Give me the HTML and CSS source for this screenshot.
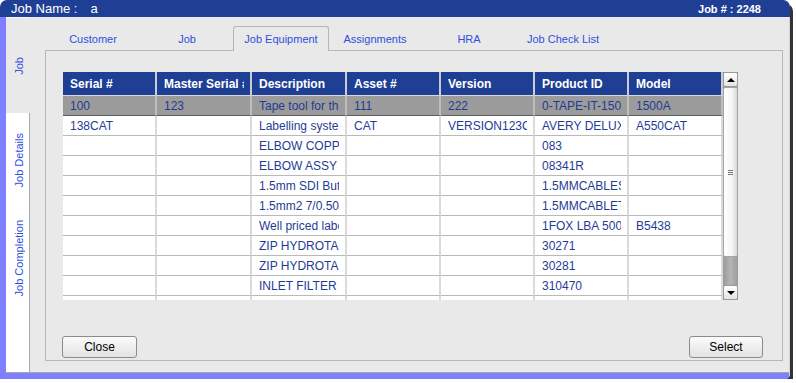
FILE: index.html
```html
<!DOCTYPE html>
<html lang="en">
<head>
  <meta charset="UTF-8">
  <title>Job Equipment</title>
  <link rel="stylesheet" href="styles.css">
</head>
<body>
  <div class="window">
    <div class="titlebar">
      <div class="job-name"><span class="job-label">Job Name :</span><span class="job-value">a</span></div>
      <div class="job-no">Job # : 2248</div>
    </div>
    <div class="frame">
      <ul class="side-tabs">
        <li class="side-tab active tab-job"><span>Job</span></li>
        <li class="side-tab tab-details"><span>Job Details</span></li>
        <li class="side-tab tab-completion"><span>Job Completion</span></li>
        <li class="side-tab side-fill"></li>
      </ul>
      <div class="side-pane">
        <ul class="tabs">
          <li class="tab">Customer</li>
          <li class="tab">Job</li>
          <li class="tab active">Job Equipment</li>
          <li class="tab">Assignments</li>
          <li class="tab">HRA</li>
          <li class="tab">Job Check List</li>
        </ul>
        <div class="tab-pane">
          <div class="grid">
            <div class="grid-body">
              <table class="grid-table">
                <colgroup>
                  <col style="width:94px"><col style="width:95px"><col style="width:95px"><col style="width:94px"><col style="width:94px"><col style="width:94px"><col style="width:94px">
                </colgroup>
                <thead>
                  <tr>
                    <th><div class="cell">Serial #</div></th>
                    <th><div class="cell">Master Serial #</div></th>
                    <th><div class="cell">Description</div></th>
                    <th><div class="cell">Asset #</div></th>
                    <th><div class="cell">Version</div></th>
                    <th><div class="cell">Product ID</div></th>
                    <th><div class="cell">Model</div></th>
                  </tr>
                </thead>
                <tbody>
                  <tr class="selected">
                    <td><div class="cell">100</div></td>
                    <td><div class="cell">123</div></td>
                    <td><div class="cell">Tape tool for the job</div></td>
                    <td><div class="cell">111</div></td>
                    <td><div class="cell">222</div></td>
                    <td><div class="cell">0-TAPE-IT-150</div></td>
                    <td><div class="cell">1500A</div></td>
                  </tr>
                  <tr>
                    <td><div class="cell">138CAT</div></td>
                    <td><div class="cell"></div></td>
                    <td><div class="cell">Labelling system</div></td>
                    <td><div class="cell">CAT</div></td>
                    <td><div class="cell">VERSION123CAT</div></td>
                    <td><div class="cell">AVERY DELUXE</div></td>
                    <td><div class="cell">A550CAT</div></td>
                  </tr>
                  <tr>
                    <td><div class="cell"></div></td>
                    <td><div class="cell"></div></td>
                    <td><div class="cell">ELBOW COPPER</div></td>
                    <td><div class="cell"></div></td>
                    <td><div class="cell"></div></td>
                    <td><div class="cell">083</div></td>
                    <td><div class="cell"></div></td>
                  </tr>
                  <tr>
                    <td><div class="cell"></div></td>
                    <td><div class="cell"></div></td>
                    <td><div class="cell">ELBOW ASSY 15</div></td>
                    <td><div class="cell"></div></td>
                    <td><div class="cell"></div></td>
                    <td><div class="cell">08341R</div></td>
                    <td><div class="cell"></div></td>
                  </tr>
                  <tr>
                    <td><div class="cell"></div></td>
                    <td><div class="cell"></div></td>
                    <td><div class="cell">1.5mm SDI Butt</div></td>
                    <td><div class="cell"></div></td>
                    <td><div class="cell"></div></td>
                    <td><div class="cell">1.5MMCABLESDI</div></td>
                    <td><div class="cell"></div></td>
                  </tr>
                  <tr>
                    <td><div class="cell"></div></td>
                    <td><div class="cell"></div></td>
                    <td><div class="cell">1.5mm2 7/0.50</div></td>
                    <td><div class="cell"></div></td>
                    <td><div class="cell"></div></td>
                    <td><div class="cell">1.5MMCABLET</div></td>
                    <td><div class="cell"></div></td>
                  </tr>
                  <tr>
                    <td><div class="cell"></div></td>
                    <td><div class="cell"></div></td>
                    <td><div class="cell">Well priced label</div></td>
                    <td><div class="cell"></div></td>
                    <td><div class="cell"></div></td>
                    <td><div class="cell">1FOX LBA 500</div></td>
                    <td><div class="cell">B5438</div></td>
                  </tr>
                  <tr>
                    <td><div class="cell"></div></td>
                    <td><div class="cell"></div></td>
                    <td><div class="cell">ZIP HYDROTAIL</div></td>
                    <td><div class="cell"></div></td>
                    <td><div class="cell"></div></td>
                    <td><div class="cell">30271</div></td>
                    <td><div class="cell"></div></td>
                  </tr>
                  <tr>
                    <td><div class="cell"></div></td>
                    <td><div class="cell"></div></td>
                    <td><div class="cell">ZIP HYDROTAIL</div></td>
                    <td><div class="cell"></div></td>
                    <td><div class="cell"></div></td>
                    <td><div class="cell">30281</div></td>
                    <td><div class="cell"></div></td>
                  </tr>
                  <tr>
                    <td><div class="cell"></div></td>
                    <td><div class="cell"></div></td>
                    <td><div class="cell">INLET FILTER</div></td>
                    <td><div class="cell"></div></td>
                    <td><div class="cell"></div></td>
                    <td><div class="cell">310470</div></td>
                    <td><div class="cell"></div></td>
                  </tr>
                  <tr>
                    <td><div class="cell"></div></td>
                    <td><div class="cell"></div></td>
                    <td><div class="cell"></div></td>
                    <td><div class="cell"></div></td>
                    <td><div class="cell"></div></td>
                    <td><div class="cell"></div></td>
                    <td><div class="cell"></div></td>
                  </tr>
                </tbody>
              </table>
            </div>
            <div class="scrollbar">
              <div class="sb-btn"><span class="arrow-up"></span></div>
              <div class="sb-thumb"><span class="grip"></span></div>
              <div class="sb-track"></div>
              <div class="sb-btn"><span class="arrow-down"></span></div>
            </div>
          </div>
          <div class="actions">
            <button class="btn btn-close">Close</button>
            <button class="btn btn-select">Select</button>
          </div>
        </div>
      </div>
    </div>
  </div>
</body>
</html>
```

FILE: styles.css
```css
* {
  box-sizing: border-box;
}
body {
  margin: 0;
  background: #fff;
  font-family: "Liberation Sans", Arial, sans-serif;
}
.window {
  width: 790px;
  height: 379px;
  border-radius: 7px 7px 5px 0;
  box-shadow: 3px 4px 0 #333;
}

/* title bar */
.titlebar {
  height: 17px;
  background: #1f3f95;
  border-radius: 7px 7px 0 0;
  color: #fff;
  display: flex;
  justify-content: space-between;
  align-items: center;
  padding: 0 29px 0 11px;
}
.job-name {
  font-size: 13px;
}
.job-value {
  margin-left: 13px;
}
.job-no {
  font-size: 11px;
  font-weight: bold;
}

/* frame with side tabs */
.frame {
  display: flex;
  height: 362px;
  background: #e9e9e9;
  border-left: 6px solid #8080ff;
  border-bottom: 6px solid #8080ff;
  border-right: 1px solid #d4d4d4;
  border-bottom-right-radius: 5px;
}
.side-tabs {
  list-style: none;
  margin: 0;
  padding: 0;
  width: 24px;
  display: flex;
  flex-direction: column;
  border-bottom: 1px solid #a8a8a8;
}
.side-tab {
  display: flex;
  align-items: center;
  justify-content: center;
  background: #fff;
  border-right: 1px solid #a8a8a8;
  color: #2f4fdf;
  font-size: 11px;
  padding-left: 2px;
}
.side-tab span {
  writing-mode: vertical-rl;
  transform: rotate(180deg);
}
.side-tab.active {
  background: #e9e9e9;
  border-right-color: transparent;
  border-top: 1px solid #f8f8f8;
}
.tab-job {
  height: 96px;
}
.tab-details {
  height: 94px;
}
.tab-completion {
  height: 102px;
}
.side-fill {
  flex: 1;
}
.side-pane {
  flex: 1;
  padding: 9px 6px 0 15px;
  border-bottom: 1px solid #a8a8a8;
}

/* horizontal tabs */
.tabs {
  list-style: none;
  margin: 0 0 0 1px;
  padding: 0;
  height: 24px;
  display: flex;
  position: relative;
  z-index: 1;
}
.tab {
  width: 94px;
  height: 24px;
  line-height: 27px;
  text-align: center;
  font-size: 11px;
  color: #2f4fdf;
}
.tab.active {
  width: 96px;
  height: 25px;
  margin: 0 -1px;
  line-height: 25px;
  background: #e9e9e9;
  border: 1px solid #b4b4b4;
  border-bottom: none;
  border-radius: 3px 3px 0 0;
}
.tab-pane {
  height: 311px;
  border: 1px solid #b8b8b8;
  padding: 21px 0 0 17px;
  display: flex;
  flex-direction: column;
}

/* grid */
.grid {
  display: flex;
  width: 675px;
  height: 228px;
}
.grid-body {
  width: 660px;
  overflow: hidden;
  background: #fff;
}
.grid-table {
  width: 660px;
  table-layout: fixed;
  border-collapse: separate;
  border-spacing: 0;
}
.grid-table th,
.grid-table td {
  box-sizing: content-box;
  padding: 0 6px 0 7px;
  text-align: left;
  white-space: nowrap;
}
.grid-table th {
  height: 23px;
  background: #1f3f95;
  color: #fff;
  font-size: 12px;
  font-weight: bold;
  border-right: 2px solid #c9ccd6;
  border-bottom: 1px solid #d8d8d8;
}
.grid-table td {
  height: 19px;
  color: #1f3c94;
  font-size: 12px;
  border-right: 2px solid #dadada;
  border-bottom: 1px solid #b9b9b9;
}
.grid-table tr.selected td {
  background: #9b9b9b;
  border-right-color: #bdbdbd;
  border-bottom-color: #5e5e5e;
}
.cell {
  overflow: hidden;
}

/* scrollbar */
.scrollbar {
  width: 15px;
  display: flex;
  flex-direction: column;
  background: linear-gradient(to right, #9a9a9a, #b4b4b4 50%, #9c9c9c);
}
.sb-btn {
  height: 15px;
  border: 1px solid #9a9a9a;
  border-radius: 2px;
  background: linear-gradient(#ffffff, #e4e4e4);
  display: flex;
  align-items: center;
  justify-content: center;
}
.arrow-up {
  border-left: 4px solid transparent;
  border-right: 4px solid transparent;
  border-bottom: 4px solid #000;
}
.arrow-down {
  border-left: 4px solid transparent;
  border-right: 4px solid transparent;
  border-top: 4px solid #000;
}
.sb-thumb {
  height: 170px;
  border: 1px solid #a4a4a4;
  border-radius: 2px;
  background: linear-gradient(to right, #ffffff, #f6f6f6 60%, #d8d8d8);
  display: flex;
  align-items: center;
  justify-content: center;
}
.grip {
  width: 5px;
  height: 5px;
  border-top: 1px solid #777;
  border-bottom: 1px solid #777;
  background: linear-gradient(#777, #777) center / 5px 1px no-repeat;
}
.sb-track {
  flex: 1;
}

/* buttons */
.actions {
  display: flex;
  justify-content: space-between;
  margin: 36px 19px 0 -1px;
}
.btn {
  height: 22px;
  border: 1px solid #8c8c8c;
  border-radius: 3px;
  background: linear-gradient(#fbfbfb, #e2e2e2);
  font-family: "Liberation Sans", Arial, sans-serif;
  font-size: 12px;
  color: #000;
  padding: 0;
}
.btn-close {
  width: 75px;
}
.btn-select {
  width: 74px;
}
```
